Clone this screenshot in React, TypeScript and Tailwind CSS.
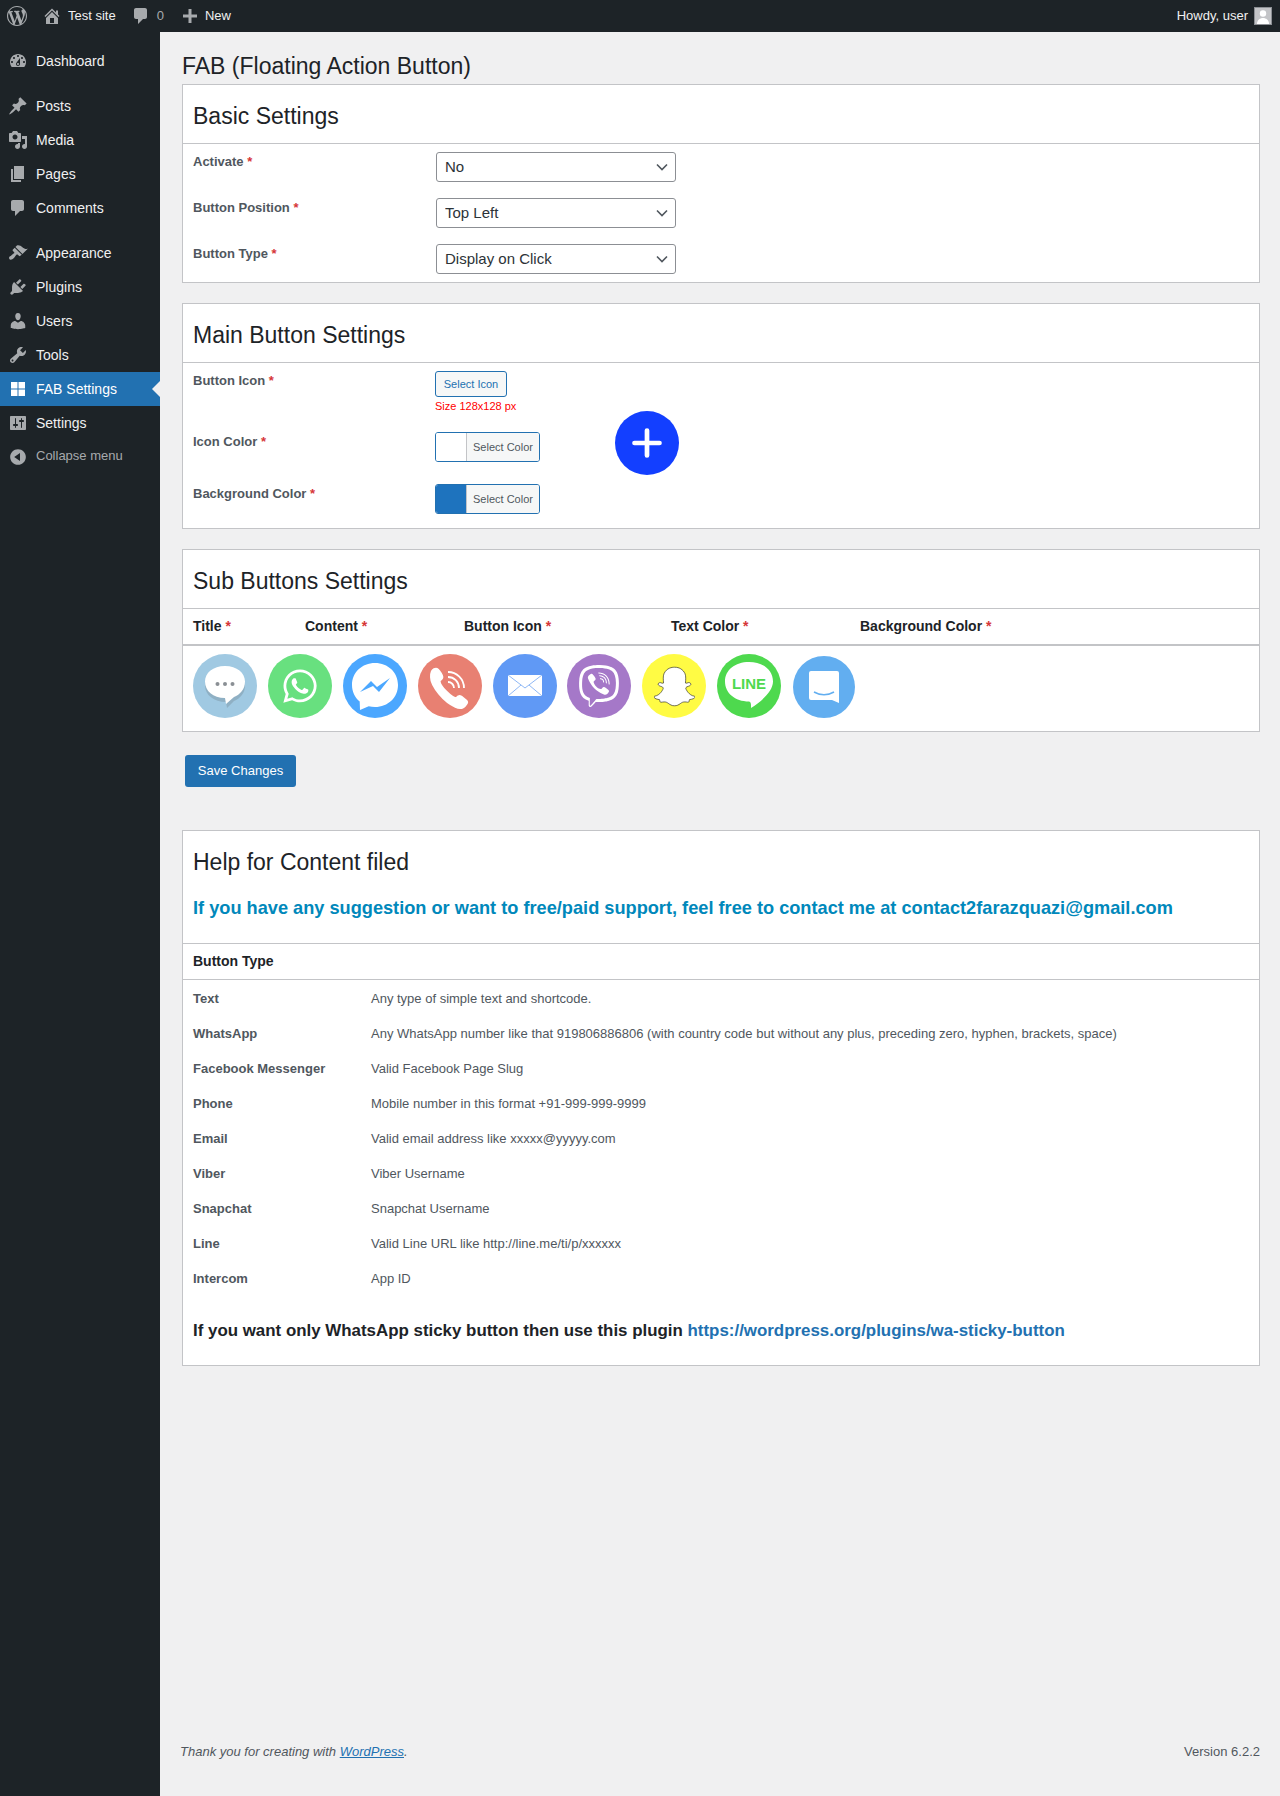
import React from "react";
import { FaWhatsapp, FaViber, FaSnapchatGhost } from "react-icons/fa";

const D = ({ d, className }: { d: string; className?: string }) => (
  <svg viewBox="0 0 20 20" className={className} fill="currentColor"><path d={d} /></svg>
);

const P = {
  wp: "M20 10c0-5.51-4.49-10-10-10C4.48 0 0 4.49 0 10c0 5.52 4.48 10 10 10 5.51 0 10-4.48 10-10zM7.78 15.37L4.37 6.22c.55-.02 1.17-.08 1.17-.08.5-.06.44-1.13-.06-1.11 0 0-1.45.11-2.37.11-.18 0-.37 0-.58-.01C4.12 2.69 6.87 1.11 10 1.11c2.33 0 4.45.87 6.05 2.34-.68-.11-1.65.39-1.65 1.58 0 .74.45 1.36.9 2.1.35.61.55 1.36.55 2.46 0 1.49-1.4 5-1.4 5l-3.03-8.37c.54-.02.82-.17.82-.17.5-.05.44-1.25-.06-1.22 0 0-1.44.12-2.38.12-.87 0-2.33-.12-2.33-.12-.5-.03-.56 1.2-.06 1.22l.92.08 1.26 3.41zM17.41 10c.24-.64.74-1.87.43-4.25.7 1.29 1.05 2.71 1.05 4.25 0 3.29-1.73 6.24-4.4 7.78.97-2.59 1.94-5.2 2.92-7.78zM6.1 18.09C3.12 16.65 1.11 13.53 1.11 10c0-1.3.23-2.48.72-3.59C3.25 10.3 4.67 14.2 6.1 18.09zm4.03-6.63l2.58 6.98c-.86.29-1.76.45-2.71.45-.79 0-1.57-.11-2.29-.33.81-2.38 1.62-4.74 2.42-7.1z",
  home: "M16 8.5l1.53 1.53-1.06 1.06L10 4.62l-6.47 6.47-1.06-1.06L10 2.5l4 4v-2h2v4zm-6-2.46l6 5.99V18H4v-5.97zM12 17v-5H8v5h4z",
  comment: "M5 2h9c1.1 0 2 .9 2 2v7c0 1.1-.9 2-2 2h-2l-5 5v-5H5c-1.1 0-2-.9-2-2V4c0-1.1.9-2 2-2z",
  plus: "M17 8.5v3h-5.500V17h-3v-5.500H3v-3h5.500V3h3v5.500z",
  dashboard: "M3.76 16h12.48c1.1-1.37 1.76-3.11 1.76-5 0-4.42-3.58-8-8-8s-8 3.58-8 8c0 1.89.66 3.63 1.76 5zM10 4c.55 0 1 .45 1 1s-.45 1-1 1-1-.45-1-1 .45-1 1-1zM6 6c.55 0 1 .45 1 1s-.45 1-1 1-1-.45-1-1 .45-1 1-1zm8 0c.55 0 1 .45 1 1s-.45 1-1 1-1-.45-1-1 .45-1 1-1zm-5.37 5.55L12 7v6c0 1.1-.9 2-2 2s-2-.9-2-2c0-.57.24-1.08.63-1.45zM4 10c.55 0 1 .45 1 1s-.45 1-1 1-1-.45-1-1 .45-1 1-1zm12 0c.55 0 1 .45 1 1s-.45 1-1 1-1-.45-1-1 .45-1 1-1zm-5 3c0-.55-.45-1-1-1s-1 .45-1 1 .45 1 1 1 1-.45 1-1z",
  post: "M10.44 3.02l1.82-1.82 6.36 6.35-1.83 1.82c-1.05-.68-2.48-.57-3.41.36l-.75.75c-.92.93-1.04 2.35-.35 3.41l-1.83 1.82-2.41-2.41-2.8 2.79c-.42.42-3.38 2.71-3.8 2.29s1.86-3.39 2.28-3.81l2.79-2.79L4.1 9.36l1.83-1.82c1.05.69 2.48.57 3.4-.36l.75-.75c.93-.92 1.05-2.35.36-3.41z",
  media: "M13 11V4c0-.55-.45-1-1-1h-1.67L9 1H5L3.67 3H2c-.55 0-1 .45-1 1v7c0 .55.45 1 1 1h10c.55 0 1-.45 1-1zM7 4.5c1.38 0 2.5 1.12 2.5 2.5S8.38 9.5 7 9.5 4.5 8.38 4.5 7 5.62 4.5 7 4.5zM14 6h5v10.5c0 1.38-1.12 2.5-2.5 2.5S14 17.88 14 16.5s1.12-2.5 2.5-2.5c.17 0 .34.02.5.05V9h-3V6zm-4 8.05V13h2v3.5c0 1.38-1.12 2.5-2.5 2.5S7 17.88 7 16.5 8.12 14 9.5 14c.17 0 .34.02.5.05z",
  page: "M6 15V2h10v13H6zm-1 1h8v2H3V5h2v11z",
  appearance: "M14.48 11.06L7.41 3.99l1.5-1.5c.5-.56 2.3-.47 3.51.32 1.21.8 1.43 1.28 2.91 2.1 1.18.64 2.45 1.26 4.45.85zm-.71.71L6.7 4.7 4.93 6.47c-.39.39-.39 1.02 0 1.41l1.06 1.06c.39.39.39 1.03 0 1.42-.6.6-1.43 1.11-2.21 1.69-.35.26-.7.53-1.01.84C1.43 13.23.91 14.24 1.1 15.3c.06.34.21.68.45.92.25.25.58.4.92.46 1.06.19 2.07-.33 3.42-1.67.31-.31.58-.66.84-1.01.58-.78 1.09-1.61 1.69-2.21.39-.39 1.03-.39 1.42 0l1.06 1.06c.39.39 1.02.39 1.41 0z",
  plugins: "M13.11 4.36L9.87 7.6 8 5.73l3.24-3.24c.35-.34 1.05-.2 1.56.32.52.51.66 1.21.31 1.55zm-8 1.77l.91-1.12 9.01 9.01-1.19.84c-.71.71-2.63 1.16-3.82 1.16H6.14L4.9 17.26c-.59.59-1.54.59-2.12 0-.59-.58-.59-1.53 0-2.12l1.24-1.24v-3.88c0-1.13.4-3.19 1.09-3.89zm7.26 3.97l3.24-3.24c.34-.35 1.04-.21 1.55.31.52.51.66 1.21.31 1.55l-3.24 3.25z",
  users: "M10 9.25c-2.27 0-2.73-3.44-2.73-3.44C7 4.02 7.82 2 9.97 2c2.16 0 2.98 2.02 2.71 3.81 0 0-.41 3.44-2.68 3.44zm0 2.57L12.72 10c2.39 0 4.52 2.33 4.52 4.53v2.49s-3.65 1.13-7.24 1.13c-3.65 0-7.24-1.13-7.24-1.13v-2.49c0-2.25 1.94-4.48 4.47-4.48z",
  tools: "M16.68 9.77c-1.34 1.34-3.3 1.67-4.95.99l-5.41 6.52c-.99.99-2.59.99-3.58 0s-.99-2.59 0-3.57l6.52-5.42c-.68-1.65-.35-3.61.99-4.95 1.28-1.28 3.12-1.62 4.72-1.06l-2.89 2.89 2.82 2.82 2.86-2.87c.53 1.58.18 3.39-1.08 4.65zM3.81 16.21c.4.39 1.04.39 1.43 0 .4-.4.4-1.04 0-1.43-.39-.4-1.03-.4-1.43 0-.39.39-.39 1.03 0 1.43z",
  fab: "M3 3h6.500v6.500H3zM10.500 3H17v6.500h-6.500zM3 10.500h6.500V17H3zM10.500 10.500H17V17h-6.500z",
  settings: "M18 16V4c0-.55-.45-1-1-1H3c-.55 0-1 .45-1 1v12c0 .55.45 1 1 1h14c.55 0 1-.45 1-1zM8 11h1c.55 0 1 .45 1 1s-.45 1-1 1H8v1.5c0 .28-.22.5-.5.5s-.5-.22-.5-.5V13H6c-.55 0-1-.45-1-1s.45-1 1-1h1V5.5c0-.28.22-.5.5-.5s.5.22.5.5V11zm5-2h-1c-.55 0-1-.45-1-1s.45-1 1-1h1V5.5c0-.28.22-.5.5-.5s.5.22.5.5V7h1c.55 0 1 .45 1 1s-.45 1-1 1h-1v5.5c0 .28-.22.5-.5.5s-.5-.22-.5-.5V9z",
  collapse: "M10 2.16c4.33 0 7.84 3.51 7.84 7.84s-3.51 7.84-7.84 7.84S2.16 14.33 2.16 10 5.71 2.16 10 2.16zm2 11.72V6.12L6.18 9.97z",
};

const groups: { label: string; icon: string; active?: boolean }[][] = [
  [{ label: "Dashboard", icon: P.dashboard }],
  [
    { label: "Posts", icon: P.post },
    { label: "Media", icon: P.media },
    { label: "Pages", icon: P.page },
    { label: "Comments", icon: P.comment },
  ],
  [
    { label: "Appearance", icon: P.appearance },
    { label: "Plugins", icon: P.plugins },
    { label: "Users", icon: P.users },
    { label: "Tools", icon: P.tools },
    { label: "FAB Settings", icon: P.fab, active: true },
    { label: "Settings", icon: P.settings },
  ],
];

const Star = () => <span className="text-[#d63638]"> *</span>;

const Card = ({ title, children }: { title: string; children: React.ReactNode }) => (
  <section className="border border-[#c3c4c7] bg-white">
    <h2 className="flex h-[59px] items-center border-b border-[#c3c4c7] px-[10px] pt-[4px] text-[23px] font-normal text-[#1d2327]">{title}</h2>
    {children}
  </section>
);

const Select = ({ value }: { value: string }) => (
  <div className="relative h-[30px] w-[240px]">
    <select defaultValue={value} className="h-full w-full appearance-none rounded-[3px] border border-[#8c8f94] bg-white pl-[8px] text-[15px] text-[#2c3338]">
      <option>{value}</option>
    </select>
    <svg viewBox="0 0 12 8" className="pointer-events-none absolute right-[8px] top-[11px] h-[8px] w-[12px]" fill="none" stroke="#50575e" strokeWidth="1.600"><path d="M1 1.500l5 5 5-5" /></svg>
  </div>
);

const ColorPick = ({ color }: { color: string }) => (
  <div className="flex h-[30px] w-[105px] overflow-hidden rounded-[3px] border border-[#2271b1]">
    <div className={`w-[31px] border-r border-[#c3c4c7] ${color}`} />
    <div className="flex flex-1 items-center justify-center bg-[#f6f7f7] text-[11px] text-[#50575e]">Select Color</div>
  </div>
);

const Circle = ({ bg, children, small }: { bg: string; children: React.ReactNode; small?: boolean }) => (
  <div className={`flex shrink-0 items-center justify-center rounded-full ${bg} ${small ? "mt-[2px] ml-[1px] h-[62px] w-[62px]" : "h-[64px] w-[64px]"}`}>{children}</div>
);

const subIcons = (
  <div className="flex gap-[11px] px-[10px] pt-[8px] pb-[13px]">
    <Circle bg="bg-[#a0c9e2]">
      <svg viewBox="0 0 64 64" className="h-[64px] w-[64px]">
        <path d="M32 14c12 0 20 7 20 15.500 0 8-5 13-11 15.500l-7 7-1-6c-12 0-21-7-21-16.500C12 21 20 14 32 14z" fill="#8fb0c4" transform="translate(0 2)" />
        <path d="M32 12c12 0 20 7 20 15.500 0 8-5 13-11 15.500l-8 7-1-6c-12 0-20-7-20-16.500C12 19 20 12 32 12z" fill="#fff" />
        <circle cx="24.500" cy="30" r="2" fill="#8a8f94" /><circle cx="32" cy="30" r="2" fill="#8a8f94" /><circle cx="39.500" cy="30" r="2" fill="#8a8f94" />
      </svg>
    </Circle>
    <Circle bg="bg-[#68e07f]"><FaWhatsapp className="h-[38px] w-[38px] text-white" /></Circle>
    <Circle bg="bg-[#4ba7ff]">
      <svg viewBox="0 0 64 64" className="h-[64px] w-[64px]">
        <path d="M32 9c13 0 23 9.500 23 22S45 53 32 53c-2.200 0-4.300-.3-6.300-.8L17 56l-.3-8.500C11.800 43.500 9 37.500 9 31 9 18.500 19 9 32 9z" fill="#fff" />
        <path d="M17 38l11-11 6 6 13-9-11 14-6-6z" fill="#4ba7ff" />
      </svg>
    </Circle>
    <Circle bg="bg-[#e88072]">
      <svg viewBox="0 0 64 64" className="h-[64px] w-[64px]">
        <g transform="translate(3 4) scale(0.84)">
          <path d="M13 16c1-2 4-4 6-3 2 1 5 6 6 8 1 2 0 4-3 6 0 3 4 9 8 13 4 4 9 8 12 8 2-3 4-3 6-2l6 5c1 1 1 3-1 5-3 4-8 4-12 2-7-3-14-9-19-15-5-6-10-14-10-20 0-3 0-5 1-7z" fill="#fff" stroke="#fff" strokeWidth="2.500" />
        </g>
        <path d="M30 28a6 6 0 016 6M30 23a11 11 0 0111 11M30 18a16 16 0 0116 16" fill="none" stroke="#fff" strokeWidth="1.800" />
      </svg>
    </Circle>
    <Circle bg="bg-[#6099f5]">
      <svg viewBox="0 0 64 64" className="h-[64px] w-[64px]">
        <rect x="15" y="21" width="34" height="21" fill="#fff" />
        <path d="M15 21l17 13 17-13M15 42l13-11M49 42L36 31" fill="none" stroke="#8fb8f5" strokeWidth="1" />
      </svg>
    </Circle>
    <div className="-ml-px"><Circle bg="bg-[#a578c8]"><FaViber className="h-[42px] w-[42px] text-white" /></Circle></div>
    <Circle bg="bg-[#fffb44]"><FaSnapchatGhost className="h-[41px] w-[41px] text-white" style={{ stroke: "#222", strokeWidth: 8 }} /></Circle>
    <Circle bg="bg-[#4ed94e]">
      <svg viewBox="0 0 64 64" className="h-[64px] w-[64px]">
        <path d="M32 8c14 0 24 8 24 19.500 0 9-10 19-22 26.500 0-2 .5-6-2-6.500C18 47.500 8 39 8 27.500 8 16 18 8 32 8z" fill="#fff" />
        <text x="32" y="35" textAnchor="middle" fontFamily="'Liberation Sans', sans-serif" fontWeight="700" fontSize="15" fill="#4ed94e">LINE</text>
      </svg>
    </Circle>
    <Circle bg="bg-[#62aef0]" small>
      <svg viewBox="0 0 62 62" className="h-[62px] w-[62px]">
        <path d="M18 15h26a2 2 0 012 2v30l-7-3H18a2 2 0 01-2-2V17a2 2 0 012-2z" fill="#fff" />
        <path d="M21 36c6 3.500 14 3.500 20 0" fill="none" stroke="#62aef0" strokeWidth="1.500" />
      </svg>
    </Circle>
  </div>
);

const helpRows = [
  ["Text", "Any type of simple text and shortcode."],
  ["WhatsApp", "Any WhatsApp number like that 919806886806 (with country code but without any plus, preceding zero, hyphen, brackets, space)"],
  ["Facebook Messenger", "Valid Facebook Page Slug"],
  ["Phone", "Mobile number in this format +91-999-999-9999"],
  ["Email", "Valid email address like xxxxx@yyyyy.com"],
  ["Viber", "Viber Username"],
  ["Snapchat", "Snapchat Username"],
  ["Line", "Valid Line URL like http://line.me/ti/p/xxxxxx"],
  ["Intercom", "App ID"],
];

export default function App() {
  return (
    <div className="flex h-[1796px] flex-col bg-[#f0f0f1] font-['Liberation_Sans',Arial,sans-serif] text-[13px] text-[#3c434a]">
      <header className="flex h-8 shrink-0 items-center justify-between bg-[#1d2327] text-[13px] text-[#f0f0f1]">
        <div className="flex items-center">
          <D d={P.wp} className="ml-[7px] h-[20px] w-[20px] text-[#a7aaad]" />
          <D d={P.home} className="ml-[15px] h-[20px] w-[20px] text-[#a7aaad]" />
          <span className="ml-[6px]">Test site</span>
          <D d={P.comment} className="ml-[15px] h-[20px] w-[20px] text-[#a7aaad]" />
          <span className="ml-[6px] text-[#a7aaad]">0</span>
          <D d={P.plus} className="ml-[16px] h-[20px] w-[20px] text-[#a7aaad]" />
          <span className="ml-[5px]">New</span>
        </div>
        <div className="mr-[8px] flex items-center gap-[6px]">
          <span>Howdy, user</span>
          <div className="flex h-[18px] w-[18px] items-end justify-center overflow-hidden border border-[#8c8f94] bg-[#c3c4c7]">
            <svg viewBox="0 0 16 16" className="h-[16px] w-[16px]" fill="#fff"><circle cx="8" cy="5.500" r="3.200" /><path d="M2 16c0-4 3-6 6-6s6 2 6 6z" /></svg>
          </div>
        </div>
      </header>
      <div className="flex min-h-0 flex-1">
        <aside className="w-40 shrink-0 bg-[#1d2327] pt-[12px] text-[14px] text-[#f0f0f1]">
          <nav className="flex flex-col gap-[11px]">
            {groups.map((g, i) => (
              <ul key={i}>
                {g.map((it) => (
                  <li key={it.label} className={`relative flex h-[34px] items-center ${it.active ? "bg-[#2271b1] text-white" : ""}`}>
                    <D d={it.icon} className={`ml-[8px] h-[20px] w-[20px] ${it.active ? "text-white" : "text-[#a7aaad]"}`} />
                    <span className="ml-[8px]">{it.label}</span>
                    {it.active && <span className="absolute right-0 top-[9px] h-0 w-0 border-y-[8px] border-r-[8px] border-y-transparent border-r-[#f0f0f1]" />}
                  </li>
                ))}
              </ul>
            ))}
          </nav>
          <div className="flex h-[34px] items-center text-[13px] text-[#a7aaad]">
            <D d={P.collapse} className="ml-[8px] h-[20px] w-[20px]" />
            <span className="ml-[8px] -mt-[3px]">Collapse menu</span>
          </div>
        </aside>
        <main className="flex min-w-0 flex-1 flex-col pl-[22px] pr-[20px]">
          <h1 className="pt-[20px] pb-[3px] text-[23px] font-normal leading-[29px] text-[#1d2327]">FAB (Floating Action Button)</h1>
          <div className="flex flex-col gap-[20px]">
            <Card title="Basic Settings">
              <div className="grid grid-cols-[243px_1fr] gap-y-[16px] px-[10px] pt-[8px] pb-[8px]">
                {[["Activate", "No"], ["Button Position", "Top Left"], ["Button Type", "Display on Click"]].map(([l, v]) => (
                  <React.Fragment key={l}>
                    <label className="pt-px text-[13px] font-bold leading-[18px] text-[#50575e]">{l}<Star /></label>
                    <Select value={v} />
                  </React.Fragment>
                ))}
              </div>
            </Card>
            <Card title="Main Button Settings">
              <div className="flex px-[10px] pt-[8px] pb-[14px]">
                <div className="flex w-[242px] flex-col pt-px font-bold leading-[18px] text-[#50575e]">
                  <label className="h-[61px]">Button Icon<Star /></label>
                  <label className="h-[52px]">Icon Color<Star /></label>
                  <label>Background Color<Star /></label>
                </div>
                <div className="flex w-[180px] flex-col">
                  <button className="h-[26px] w-[72px] rounded-[3px] border border-[#2271b1] bg-[#f6f7f7] text-[11px] text-[#2271b1]">Select Icon</button>
                  <p className="mt-[3px] text-[11px] leading-[13px] text-[#ff0000]">Size 128x128 px</p>
                  <div className="mt-[19px] flex flex-col gap-[22px]">
                    <ColorPick color="bg-white" />
                    <ColorPick color="bg-[#1e73be]" />
                  </div>
                </div>
                <div className="mt-[40px] flex h-[64px] w-[64px] items-center justify-center rounded-full bg-[#133fff]">
                  <svg viewBox="0 0 32 32" className="h-[32px] w-[32px]" fill="none" stroke="#fff" strokeWidth="4.700" strokeLinecap="round"><path d="M16 3.500v25M3.500 16h25" /></svg>
                </div>
              </div>
            </Card>
            <Card title="Sub Buttons Settings">
              <div className="grid h-[37px] grid-cols-[112px_159px_207px_189px_1fr] items-center border-b-2 border-[#c3c4c7] px-[10px] text-[14px] font-bold text-[#1d2327]">
                <span>Title<Star /></span>
                <span>Content<Star /></span>
                <span>Button Icon<Star /></span>
                <span>Text Color<Star /></span>
                <span>Background Color<Star /></span>
              </div>
              {subIcons}
            </Card>
          </div>
          <button className="mt-[23px] ml-[3px] h-[32px] w-[111px] rounded-[3px] bg-[#2271b1] text-[13px] text-white">Save Changes</button>
          <section className="mt-[43px] border border-[#c3c4c7] bg-white">
            <h2 className="px-[10px] pt-[15px] text-[23px] font-normal leading-[32px] text-[#1d2327]">Help for Content filed</h2>
            <p className="mt-[18px] px-[10px] pb-[23px] text-[18.2px] font-bold leading-[24px] text-[#0088bb]">If you have any suggestion or want to free/paid support, feel free to contact me at contact2farazquazi@gmail.com</p>
            <div className="flex h-[37px] items-center border-y border-[#c3c4c7] px-[10px] text-[14px] font-bold text-[#1d2327]">Button Type</div>
            <div className="px-[10px] pt-[1px]">
              {helpRows.map(([k, v]) => (
                <div key={k} className="grid h-[35px] grid-cols-[178px_1fr] items-center text-[13px] text-[#50575e]">
                  <span className="font-bold">{k}</span>
                  <span>{v}</span>
                </div>
              ))}
            </div>
            <p className="mt-[23px] px-[10px] pb-[22px] text-[16.9px] font-bold leading-[24px] text-[#1d2327]">
              If you want only WhatsApp sticky button then use this plugin <span className="text-[#2271b1]">https://wordpress.org/plugins/wa-sticky-button</span>
            </p>
          </section>
          <footer className="mt-auto flex items-center justify-between pb-[35px] text-[13px] leading-[18px] text-[#50575e]">
            <span className="-ml-[2px] italic">Thank you for creating with <span className="text-[#2271b1] underline">WordPress</span>.</span>
            <span>Version 6.2.2</span>
          </footer>
        </main>
      </div>
    </div>
  );
}
